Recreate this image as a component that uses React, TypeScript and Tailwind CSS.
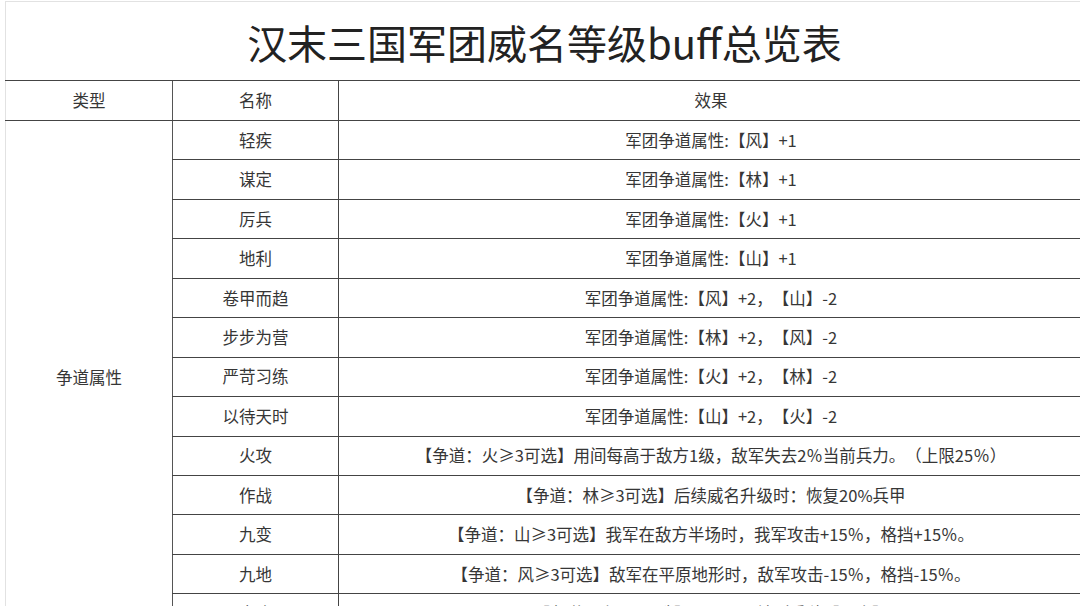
import React from "react";

const rows: [string, string][] = [
  ["轻疾", "军团争道属性:【风】+1"],
  ["谋定", "军团争道属性:【林】+1"],
  ["厉兵", "军团争道属性:【火】+1"],
  ["地利", "军团争道属性:【山】+1"],
  ["卷甲而趋", "军团争道属性:【风】+2，【山】-2"],
  ["步步为营", "军团争道属性:【林】+2，【风】-2"],
  ["严苛习练", "军团争道属性:【火】+2，【林】-2"],
  ["以待天时", "军团争道属性:【山】+2，【火】-2"],
  ["火攻", "【争道：火≥3可选】用间每高于敌方1级，敌军失去2％当前兵力。（上限25％）"],
  ["作战", "【争道：林≥3可选】后续威名升级时：恢复20%兵甲"],
  ["九变", "【争道：山≥3可选】我军在敌方半场时，我军攻击+15％，格挡+15％。"],
  ["九地", "【争道：风≥3可选】敌军在平原地形时，敌军攻击-15％，格挡-15％。"],
  ["水攻", "【争道：山≥3可选】周围可用地形兵种【以逸】"],
];

export default function App() {
  return (
    <div
      className="w-[1080px] h-[606px] overflow-hidden bg-white text-[#363636] [text-spacing-trim:space-all]"
      style={{ fontFamily: '"Noto Sans CJK SC", "Noto Sans", sans-serif' }}
    >
      <div className="pt-[1px] pl-[5px]">
        <table className="border-collapse w-[1078px] table-fixed">
          <colgroup>
            <col className="w-[167px]" />
            <col className="w-[166px]" />
            <col />
          </colgroup>
          <tbody>
            <tr className="h-[79px]">
              <td
                colSpan={3}
                className="border-t border-l border-[#e2e2e2] border-b-[#444] border-b text-center text-[40px] text-[#222] leading-none pt-[2px]"
              >
                汉末三国军团威名等级buff总览表
              </td>
            </tr>
            <tr className="h-[40px] text-[16.5px]">
              <td className="border-l border-l-[#e2e2e2] border-b border-b-[#444] text-center">类型</td>
              <td className="border-l border-l-[#555] border-b border-b-[#444] text-center">名称</td>
              <td className="border-l border-l-[#444] border-b border-b-[#444] text-center">效果</td>
            </tr>
            {rows.map(([name, eff], i) => (
              <tr key={i} className="h-[39.45px] text-[16.5px]">
                {i === 0 && (
                  <td
                    rowSpan={13}
                    className="border-l border-l-[#e2e2e2] text-center align-middle"
                  >
                    争道属性
                  </td>
                )}
                <td className="border-l border-l-[#555] border-b border-b-[#444] text-center whitespace-nowrap">
                  {name}
                </td>
                <td className="border-l border-l-[#444] border-b border-b-[#444] text-center whitespace-nowrap">
                  {eff}
                </td>
              </tr>
            ))}
          </tbody>
        </table>
      </div>
    </div>
  );
}
